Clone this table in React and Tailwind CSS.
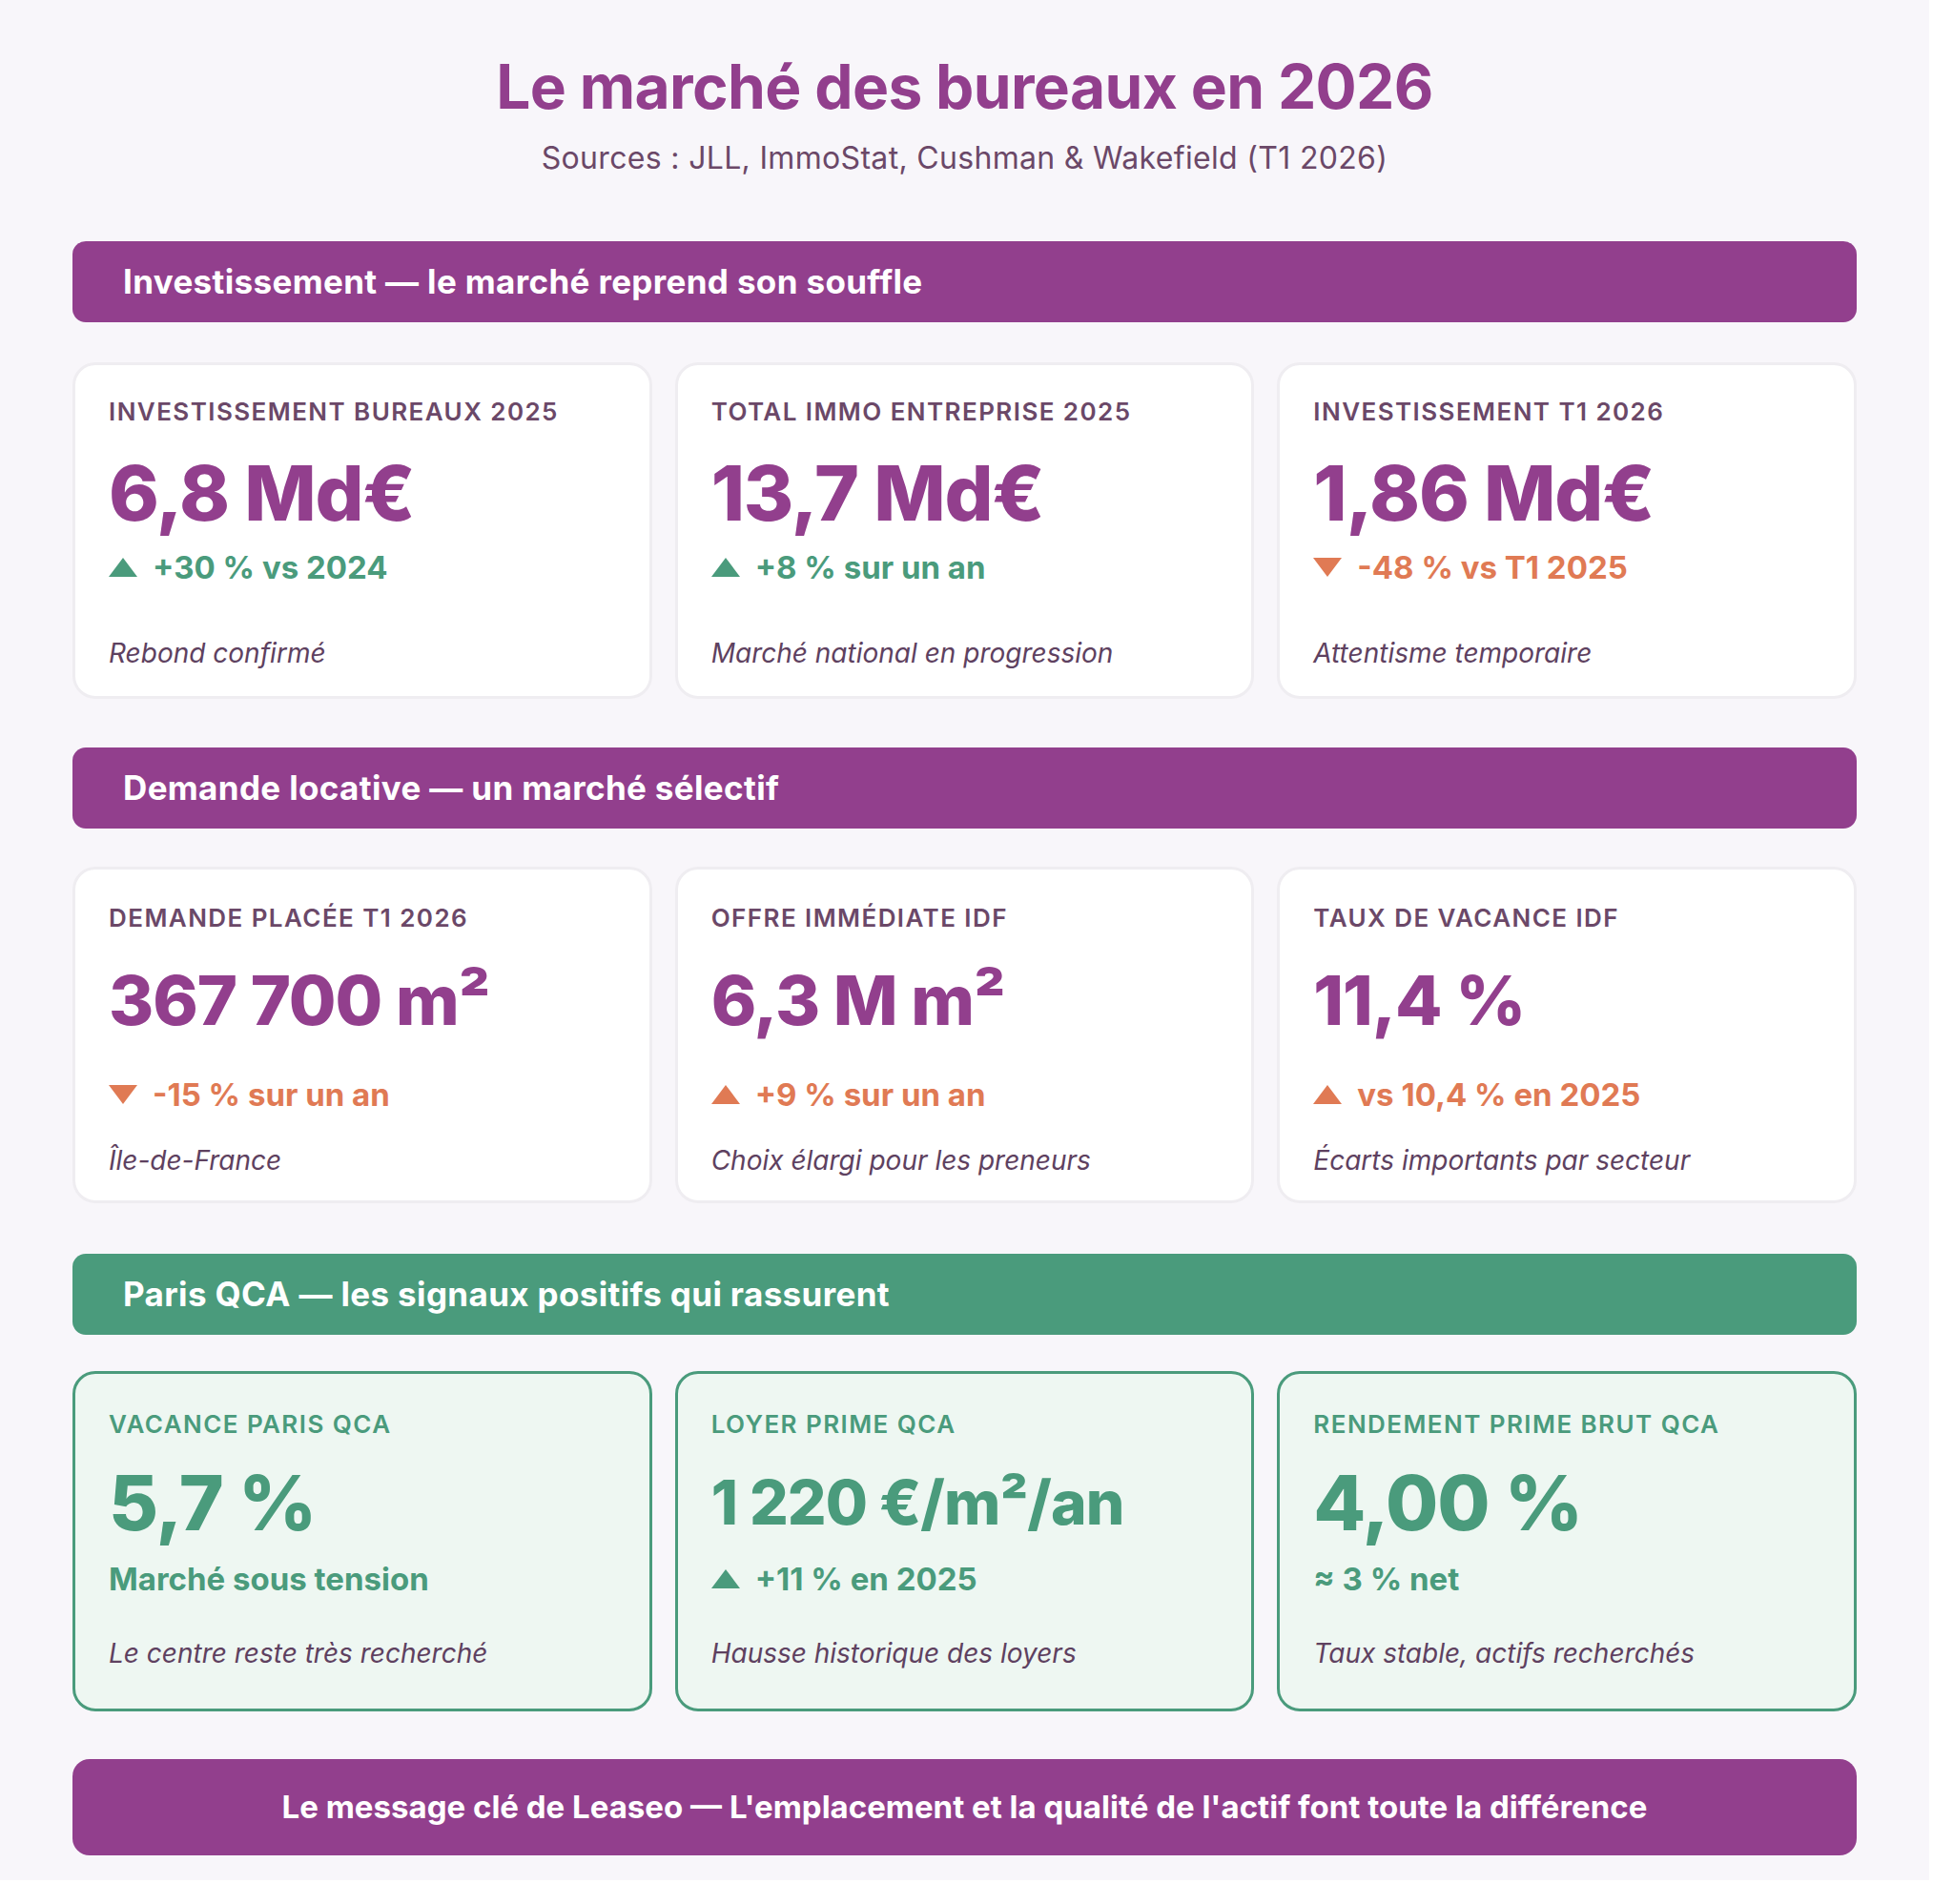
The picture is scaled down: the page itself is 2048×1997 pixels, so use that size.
const sections = [
  {
    title: "Investissement — le marché reprend son souffle",
    tone: "purple",
    layout: "a",
    cards: [
      { label: "Investissement bureaux 2025", value: "6,8 Md€", delta: "+30 % vs 2024", dir: "up", color: "green", note: "Rebond confirmé" },
      { label: "Total immo entreprise 2025", value: "13,7 Md€", delta: "+8 % sur un an", dir: "up", color: "green", note: "Marché national en progression" },
      { label: "Investissement T1 2026", value: "1,86 Md€", delta: "-48 % vs T1 2025", dir: "down", color: "orange", note: "Attentisme temporaire" },
    ],
  },
  {
    title: "Demande locative — un marché sélectif",
    tone: "purple",
    layout: "b",
    cards: [
      { label: "Demande placée T1 2026", value: "367 700 m²", delta: "-15 % sur un an", dir: "down", color: "orange", note: "Île-de-France" },
      { label: "Offre immédiate IDF", value: "6,3 M m²", delta: "+9 % sur un an", dir: "up", color: "orange", note: "Choix élargi pour les preneurs" },
      { label: "Taux de vacance IDF", value: "11,4 %", delta: "vs 10,4 % en 2025", dir: "up", color: "orange", note: "Écarts importants par secteur" },
    ],
  },
  {
    title: "Paris QCA — les signaux positifs qui rassurent",
    tone: "green",
    layout: "c",
    cards: [
      { label: "Vacance Paris QCA", value: "5,7 %", delta: "Marché sous tension", dir: null, color: "green", note: "Le centre reste très recherché" },
      { label: "Loyer prime QCA", value: "1 220 €/m²/an", small: true, delta: "+11 % en 2025", dir: "up", color: "green", note: "Hausse historique des loyers" },
      { label: "Rendement prime brut QCA", value: "4,00 %", delta: "≈ 3 % net", dir: null, color: "green", note: "Taux stable, actifs recherchés" },
    ],
  },
];

// marges verticales par rangée, relevées sur la maquette
const spacing = {
  a: { card: "h-[353px] pt-[33px]", value: "mt-[25px] text-[80px]", delta: "mt-[14px]", note: "mt-[52px]" },
  b: { card: "h-[353px] pt-[35px]", value: "mt-[26px] text-[72px]", delta: "mt-[35px]", note: "mt-[31px]" },
  c: { card: "h-[357px] pt-[37px]", value: "mt-[22px] text-[80px]", delta: "mt-[16px]", note: "mt-[40px]" },
};

const Triangle = ({ dir }) => (
  <svg width="30" height="20" viewBox="0 0 30 20" className="mr-[16px] shrink-0" fill="currentColor">
    {dir === "up" ? <path d="M15 0 L30 20 L0 20 Z" /> : <path d="M0 0 L30 0 L15 20 Z" />}
  </svg>
);

const Card = ({ card, layout, qca }) => {
  const s = spacing[layout];
  return (
    <div
      className={`flex flex-col rounded-[24px] border-[3px] px-[35px] ${s.card} ${
        qca ? "border-[#4a9b7c] bg-[#eef7f2]" : "border-[#efedf1] bg-white"
      }`}
    >
      <div
        className={`text-[26px] leading-[32px] font-semibold uppercase tracking-[0.055em] ${
          qca ? "text-[#4a9b7c]" : "text-[#6b4868]"
        }`}
      >
        {card.label}
      </div>
      <div
        className={`leading-[88px] font-extrabold tracking-[-0.015em] whitespace-nowrap ${s.value} ${
          card.small ? "!text-[64px]" : ""
        } ${qca ? "text-[#4a9b7c]" : "text-[#923f8d]"}`}
      >
        {card.value}
      </div>
      <div
        className={`flex items-center text-[33px] leading-[40px] font-bold ${s.delta} ${
          card.color === "green" ? "text-[#4a9b7c]" : "text-[#e07a54]"
        }`}
      >
        {card.dir && <Triangle dir={card.dir} />}
        <span>{card.delta}</span>
      </div>
      <div className={`text-[28px] leading-[36px] italic text-[#5e4160] ${s.note}`}>{card.note}</div>
    </div>
  );
};

const Section = ({ section, first }) => (
  <section className={first ? "mt-[65px]" : ""}>
    <div
      className={`flex h-[85px] items-center rounded-[14px] pl-[53px] text-[35px] font-bold tracking-[0.01em] text-white ${
        section.tone === "green" ? "bg-[#4a9b7c]" : "bg-[#923f8d]"
      }`}
    >
      {section.title}
    </div>
    <div
      className={`grid grid-cols-3 gap-[24px] ${
        section.layout === "a" ? "mt-[42px] mb-[51px]" : section.layout === "b" ? "mt-[40px] mb-[53px]" : "mt-[38px] mb-[50px]"
      }`}
    >
      {section.cards.map((c) => (
        <Card key={c.label} card={c} layout={section.layout} qca={section.tone === "green"} />
      ))}
    </div>
  </section>
);

export default function App() {
  return (
    <div className="min-h-screen bg-white font-['Inter',sans-serif]">
      <div className="w-[2023px] h-[1972px] bg-[#f8f6fa] px-[76px] pt-[51px]">
        <header className="text-center">
          <h1 className="text-[64px] leading-[80px] font-bold tracking-[-0.01em] text-[#923f8d]">
            Le marché des bureaux en 2026
          </h1>
          <p className="mt-[13px] text-[32px] leading-[44px] tracking-[0.01em] text-[#6b4868]">
            Sources : JLL, ImmoStat, Cushman &amp; Wakefield (T1 2026)
          </p>
        </header>

        {sections.map((s, i) => (
          <Section key={s.title} section={s} first={i === 0} />
        ))}

        <div className="flex h-[101px] items-center justify-center rounded-[18px] bg-[#923f8d] text-[33px] font-bold text-white">
          Le message clé de Leaseo — L'emplacement et la qualité de l'actif font toute la différence
        </div>
      </div>
    </div>
  );
}
